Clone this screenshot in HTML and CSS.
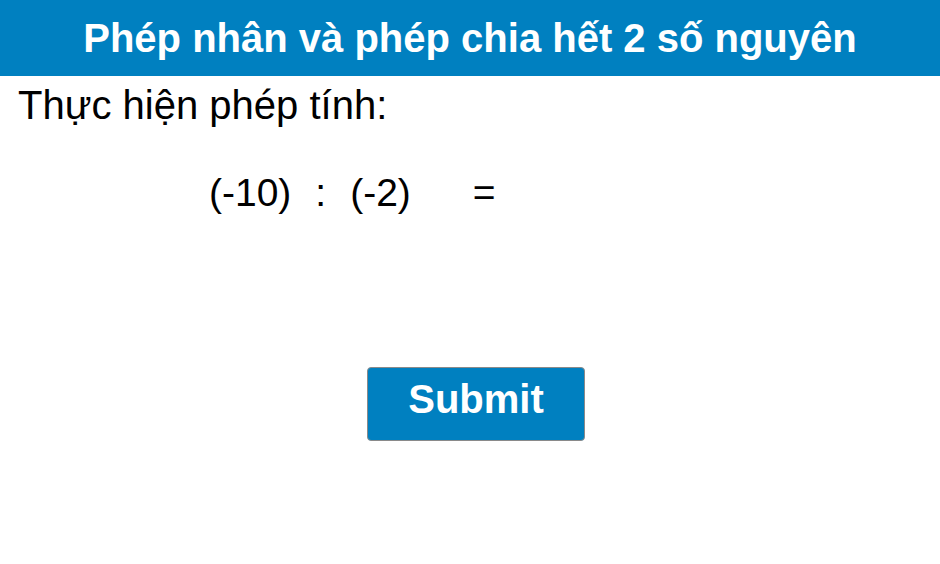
FILE: index.html
```html
<!DOCTYPE html>
<html lang="vi">
<head>
    <meta charset="UTF-8">
    <title>Phép nhân và phép chia hết 2 số nguyên</title>
    <link rel="stylesheet" href="styles.css">
</head>
<body>
    <header class="top-bar">
        <h1>Phép nhân và phép chia hết 2 số nguyên</h1>
    </header>
    <main class="quiz">
        <p class="prompt">Thực hiện phép tính:</p>
        <div class="expr">
            <span class="num">(-10)</span>
            <span class="op">:</span>
            <span class="num">(-2)</span>
            <span class="eq">=</span>
        </div>
        <div class="actions">
            <button class="submit-btn">Submit</button>
        </div>
    </main>
</body>
</html>
```

FILE: styles.css
```css
body {
    margin: 0;
    font-family: "Liberation Sans", Arial, sans-serif;
    background: #ffffff;
    color: #000000;
}

.top-bar {
    background-color: #0080c0;
    height: 76px;
    display: flex;
    align-items: center;
    justify-content: center;
}

.top-bar h1 {
    margin: 0;
    color: #ffffff;
    font-size: 40px;
    font-weight: bold;
}

.prompt {
    margin: 6px 0 0 18px;
    font-size: 40px;
    line-height: 46px;
}

/* expression row */
.expr {
    display: flex;
    align-items: baseline;
    margin: 42px 0 0 209px;
    font-size: 39px;
    line-height: 45px;
}

.op {
    margin: 0 24px 0 24px;
}

.eq {
    margin-left: 62px;
}

.actions {
    margin: 152px 0 0 367px;
}

.submit-btn {
    width: 218px;
    height: 74px;
    padding: 0 0 9px;
    background-color: #0080c0;
    color: #ffffff;
    border: 1px solid #8a8a8a;
    border-radius: 4px;
    font-family: "Liberation Sans", Arial, sans-serif;
    font-size: 40px;
    font-weight: bold;
    cursor: pointer;
}
```
